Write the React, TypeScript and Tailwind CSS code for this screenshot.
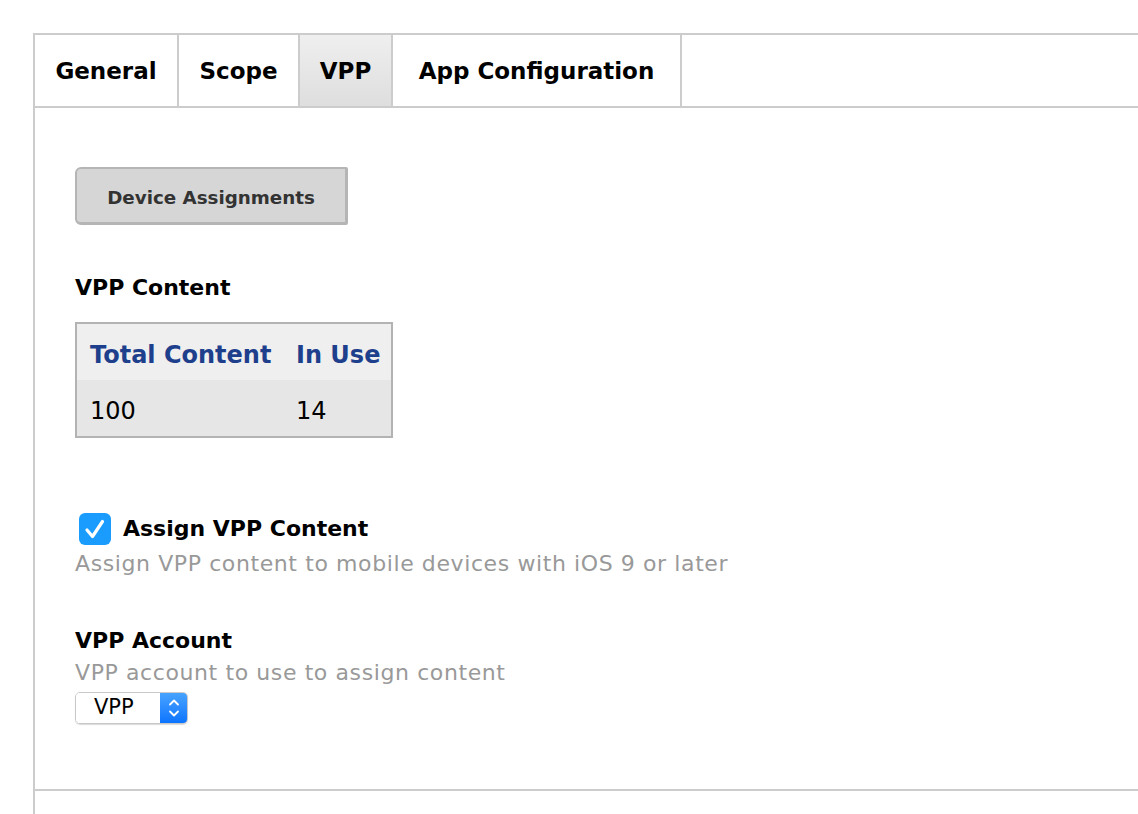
import React from "react";

export default function App() {
  const tabs = [
    { name: "General", active: false, w: "w-[144px]" },
    { name: "Scope", active: false, w: "w-[121px]" },
    { name: "VPP", active: true, w: "w-[93px]" },
    { name: "App Configuration", active: false, w: "w-[289px]" },
  ];
  return (
    <div
      className="w-[1138px] h-[814px] overflow-hidden bg-white pt-[33px] pl-[33px]"
      style={{ fontFamily: '"DejaVu Sans", "Liberation Sans", sans-serif' }}
    >
      <div className="border-l-2 border-t-2 border-[#cccccc] h-[900px] flex flex-col">
        <div className="flex h-[73px] border-b-2 border-[#cccccc]">
          {tabs.map((t) => (
            <div
              key={t.name}
              className={`${t.w} h-full flex items-center justify-center pt-[2px] border-r-2 border-[#cccccc] text-[23px] font-bold text-black ${
                t.active ? "bg-gradient-to-b from-[#efefef] to-[#dedede]" : "bg-white"
              }`}
            >
              {t.name}
            </div>
          ))}
        </div>
        <div className="h-[681px] pl-[40px] pt-[59px] flex flex-col items-start">
          <div className="w-[273px] h-[58px] rounded-l-[6px] rounded-r-[2px] border-2 border-[#b5b5b5] border-r-[3px] border-b-[3px] bg-[#d6d6d6] flex items-center justify-center pt-[4px] text-[18.3px] font-bold text-[#333333]">
            Device Assignments
          </div>
          <div className="mt-[48px] text-[22px] font-bold text-black leading-[30px]">VPP Content</div>
          <div className="mt-[19px] border-2 border-[#b3b3b3] w-[318px]">
            <div className="bg-[#efefef] h-[56px] flex items-center pt-[5px] text-[24px] font-bold text-[#1e3f8c] pl-[13px]">
              <span className="w-[206px]">Total Content</span>
              <span>In Use</span>
            </div>
            <div className="bg-[#e6e6e6] h-[56px] flex items-center pt-[5px] text-[24px] text-black pl-[13px]">
              <span className="w-[206px]">100</span>
              <span>14</span>
            </div>
          </div>
          <div className="mt-[75px] flex items-center ml-[4px]">
            <div className="w-[32px] h-[32px] rounded-[6px] bg-[#1a9cff] flex items-center justify-center">
              <svg width="32" height="32" viewBox="0 0 32 32">
                <path d="M8 17 L13.5 23.5 L23.5 8.5" fill="none" stroke="white" strokeWidth="3.2" strokeLinecap="round" strokeLinejoin="round" />
              </svg>
            </div>
            <span className="ml-[12px] text-[22px] font-bold text-black leading-[30px]">Assign VPP Content</span>
          </div>
          <div className="mt-[4px] text-[22px] tracking-[0.6px] text-[#999999] leading-[30px]">
            Assign VPP content to mobile devices with iOS 9 or later
          </div>
          <div className="mt-[47px] text-[22px] font-bold text-black leading-[30px]">VPP Account</div>
          <div className="mt-[2px] text-[22px] tracking-[0.6px] text-[#999999] leading-[30px]">VPP account to use to assign content</div>
          <div className="mt-[4px] w-[113px] h-[32px] rounded-[5px] border border-[#c8c8c8] shadow-[0_1px_1px_rgba(0,0,0,0.15)] flex overflow-hidden">
            <div className="flex-1 bg-white flex items-center pl-[18px] text-[21px] text-black">VPP</div>
            <div className="w-[27px] bg-gradient-to-b from-[#47a3ff] to-[#0a74ff] flex items-center justify-center">
              <svg width="14" height="26" viewBox="0 0 14 26">
                <path d="M3 9.5 L7 5.5 L11 9.5" fill="none" stroke="white" strokeWidth="1.8" strokeLinecap="round" strokeLinejoin="round" />
                <path d="M3 16.5 L7 20.5 L11 16.5" fill="none" stroke="white" strokeWidth="1.8" strokeLinecap="round" strokeLinejoin="round" />
              </svg>
            </div>
          </div>
        </div>
        <div className="border-t-2 border-[#cccccc] flex-1"></div>
      </div>
    </div>
  );
}
